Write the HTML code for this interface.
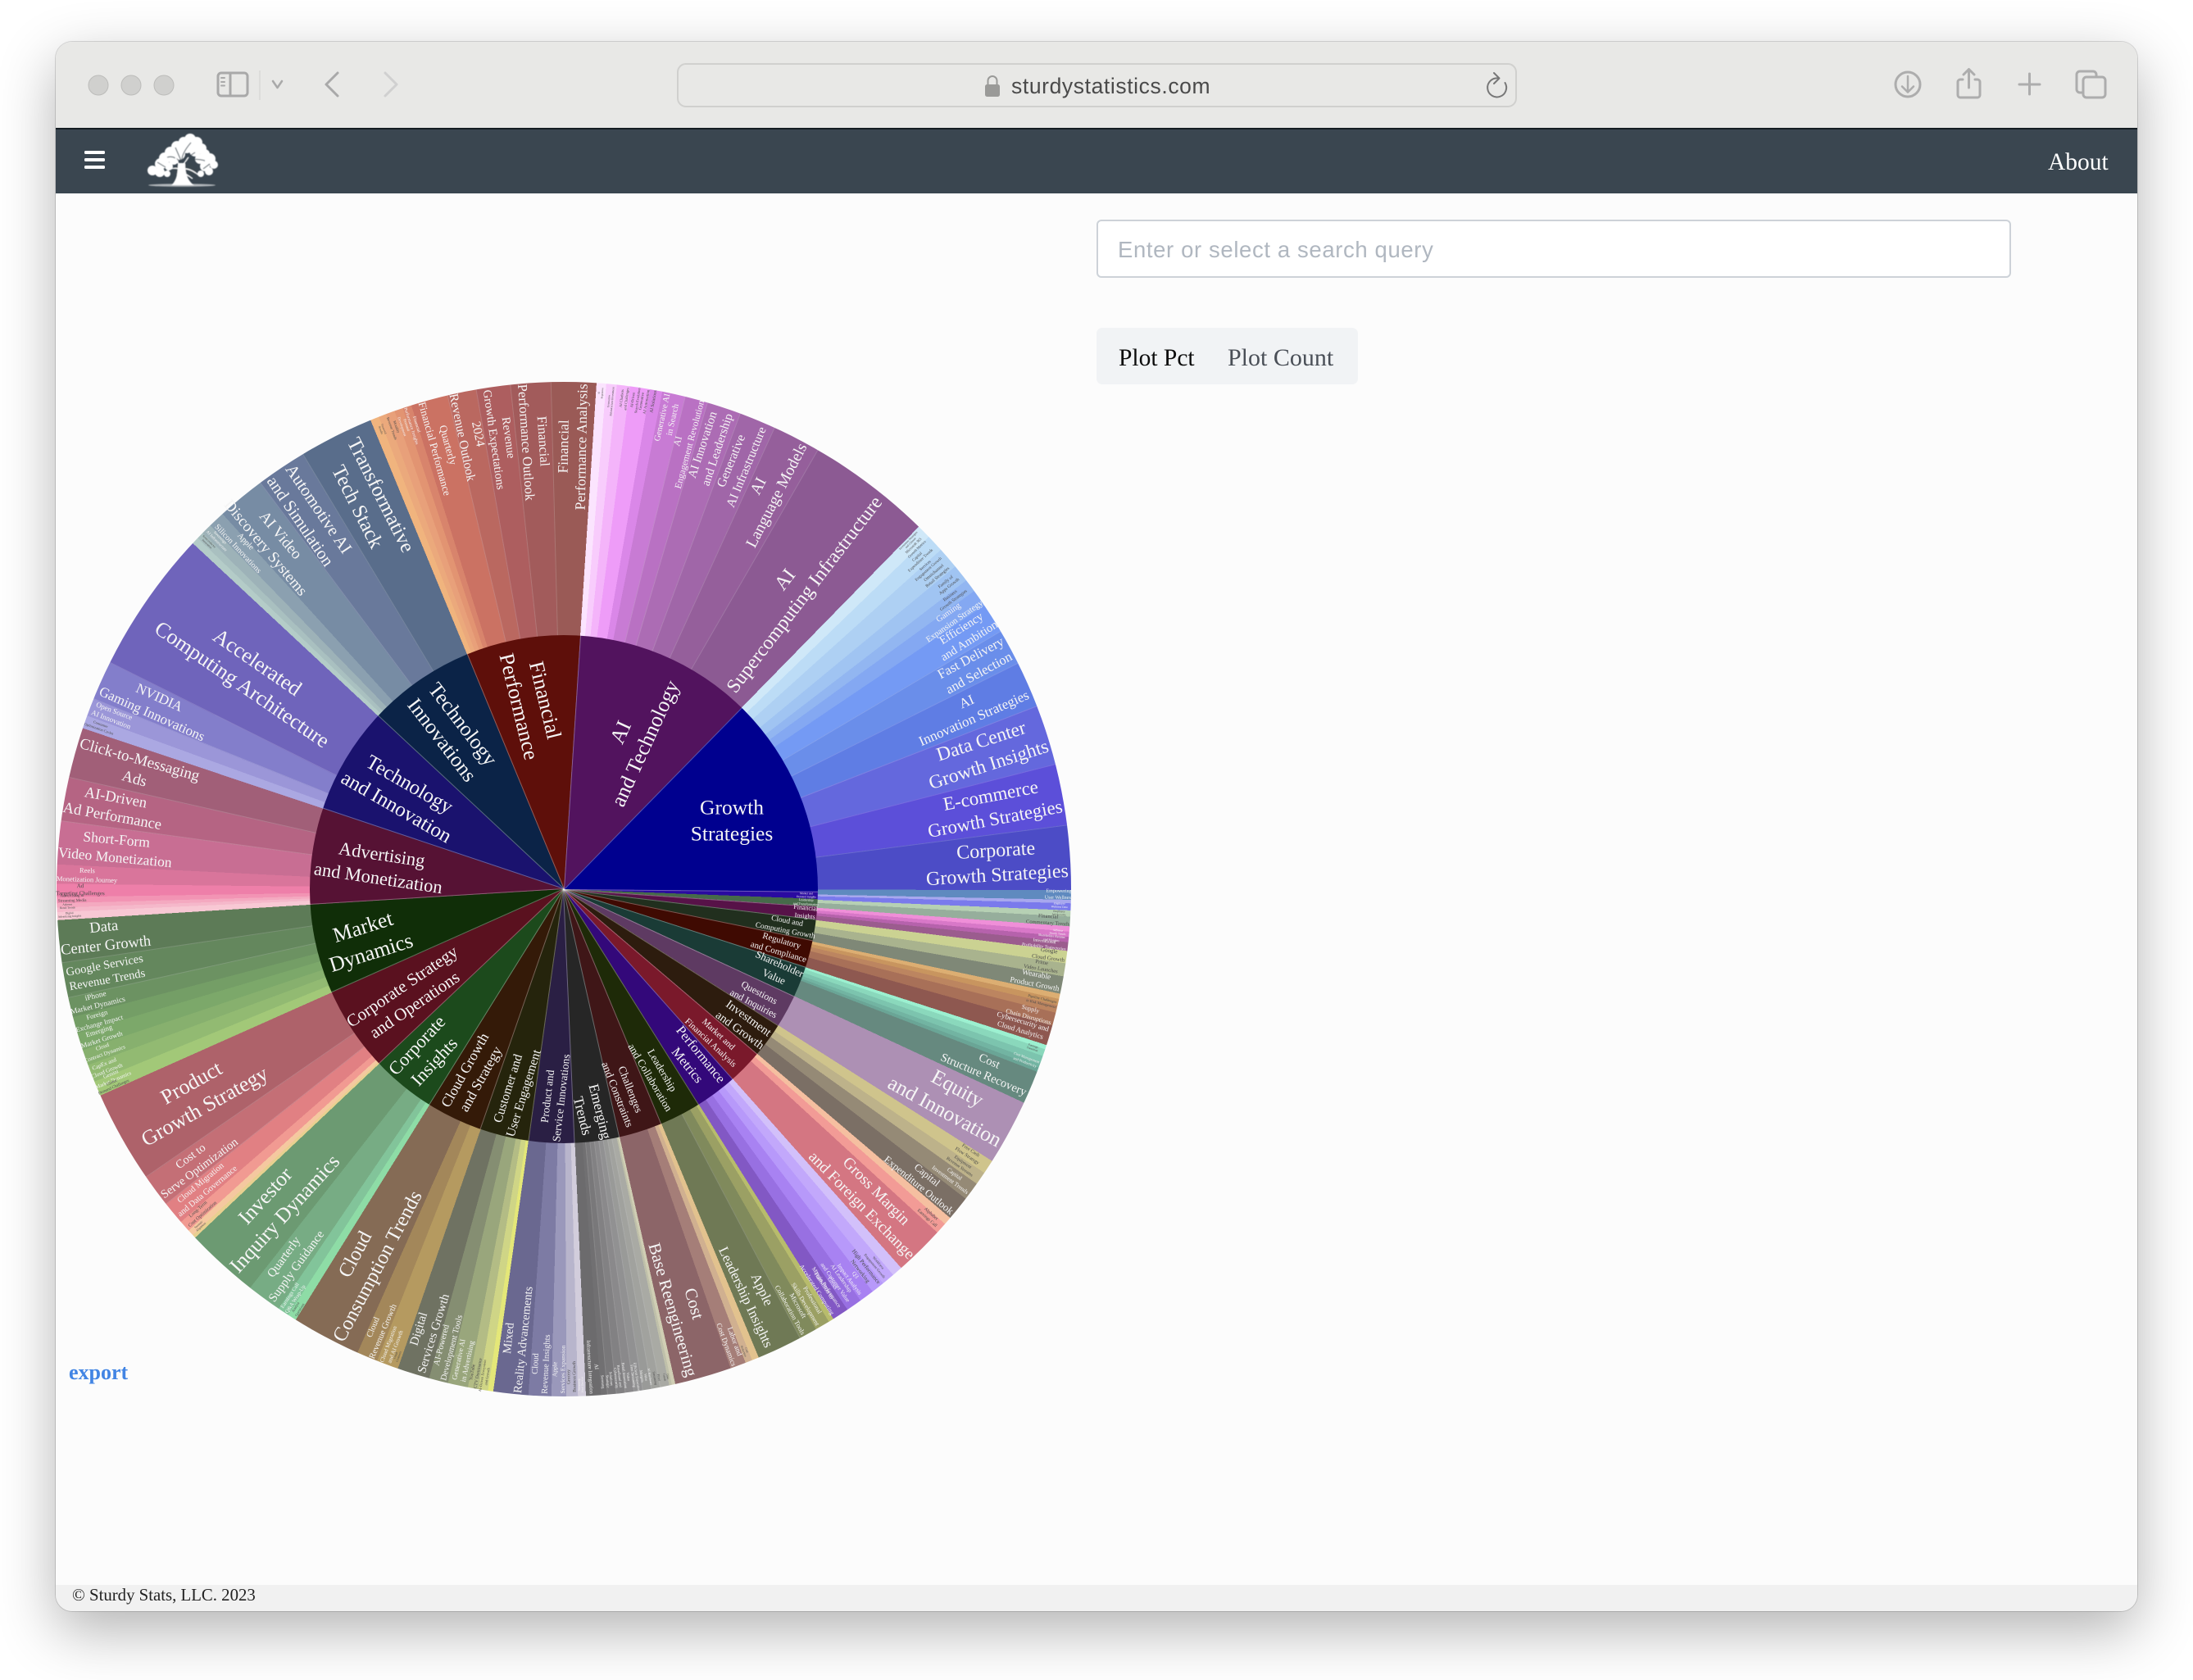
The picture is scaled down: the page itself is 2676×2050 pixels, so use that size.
<!DOCTYPE html>
<html lang="en"><head><meta charset="utf-8"><title>Sturdy Stats</title>
<style>
html,body{margin:0;padding:0;background:#fff;width:2676px;height:2050px;overflow:hidden}
*{box-sizing:border-box}
body{position:relative;font-family:"Liberation Serif",serif}
#win{position:absolute;left:68px;top:51px;width:2540px;height:1915px;border-radius:20px;background:#fcfcfc;box-shadow:0 24px 70px rgba(0,0,0,.3),0 0 0 1px rgba(0,0,0,.14)}
#bar{position:absolute;left:68px;top:51px;width:2540px;height:105px;background:#e8e8e6;border-radius:20px 20px 0 0}
#nav{position:absolute;left:68px;top:156px;width:2540px;height:80px;background:#3a4650;border-top:2px solid #141c22}
#foot{position:absolute;left:68px;top:1934px;width:2540px;height:32px;background:#f1f1f1;border-radius:0 0 20px 20px}
#url{position:absolute;left:826px;top:77px;width:1025px;height:54px;border:2px solid #d0d0ce;border-radius:11px}
.t{position:absolute;white-space:nowrap}
#ic{position:absolute;left:0;top:0}
#outer,#inner{position:absolute;border-radius:50%}
#outer{left:69px;top:466px;width:1238px;height:1238px;background:conic-gradient(
#9a5a56 0deg 3.7deg,#fbe4fe 3.7deg 4.8deg,#f8ccfc 4.8deg 6deg,#f4b4fa 6deg 7.5deg,#ee9cf8 7.5deg 9.8deg,#da87e8 9.8deg 11.2deg,#c87bd4 11.2deg 13.8deg,#b971c3 13.8deg 16.4deg,#ac6cb4 16.4deg 20.3deg,#a066a8 20.3deg 24.5deg,#955f9b 24.5deg 30deg,#8c5a93 30deg 44.4deg,
#cfe8f8 44.4deg 46deg,#bcdcf6 46deg 48deg,#aed0f3 48deg 50.5deg,#a0c4f2 50.5deg 52.5deg,#92b6f1 52.5deg 54deg,#84a8f2 54deg 56deg,#749af4 56deg 59.4deg,#6a8eea 59.4deg 63.5deg,#5f7de4 63.5deg 68.8deg,#6468dd 68.8deg 75.7deg,#5c4fd9 75.7deg 82.7deg,#4c4cc6 82.7deg 90.1deg,
#5f8abf 90.1deg 91.2deg,#a8a8ee 91.2deg 91.6deg,#7a7aec 91.6deg 92.4deg,#b6d0b4 92.4deg 93.1deg,#96ae9c 93.1deg 94.2deg,#ef8fd8 94.2deg 94.8deg,#d878c8 94.8deg 95.4deg,#b662ac 95.4deg 96deg,#9b5c8e 96deg 97deg,#cbd292 97deg 98.4deg,#a9b38e 98.4deg 99.9deg,#7f8877 99.9deg 101.9deg,#dcae72 101.9deg 102.5deg,#c8955f 102.5deg 103.2deg,#bc8560 103.2deg 104.1deg,#a87058 104.1deg 105.6deg,#8e5850 105.6deg 107.9deg,
#9cf0d0 107.9deg 108.4deg,#8ad8bc 108.4deg 109.2deg,#7cc4ae 109.2deg 110deg,#72b4a2 110deg 110.6deg,#6aa596 110.6deg 111.1deg,#66897f 111.1deg 114.9deg,#ad90b4 114.9deg 122.4deg,
#cfc48c 122.4deg 124deg,#bdb28a 124deg 125.5deg,#958a76 125.5deg 127.6deg,#7b6f65 127.6deg 130.4deg,#f5bfa0 130.4deg 131.3deg,#f29b96 131.3deg 132.6deg,#d47682 132.6deg 138.3deg,
#d2c0fa 138.3deg 139.5deg,#c2a8fb 139.5deg 141deg,#b799fa 141deg 142.5deg,#a882f2 142.5deg 144.2deg,#9870e2 144.2deg 146deg,#8258c4 146deg 147.9deg,
#b8bc6c 147.9deg 148.5deg,#9ba064 148.5deg 150.2deg,#808a5c 150.2deg 152.2deg,#6f7955 152.2deg 157.4deg,
#e2c28e 157.4deg 158.2deg,#d0b090 158.2deg 159deg,#a57e78 159deg 160.8deg,#8c6568 160.8deg 167.3deg,
#d0ceb4 167.3deg 167.7deg,#bfc0aa 167.7deg 168deg,#a9aaa4 168deg 169deg,#a1a29e 169deg 170deg,#999a98 170deg 171deg,#919192 171deg 172deg,#8a898b 172deg 173deg,#828183 173deg 174deg,#79787a 174deg 175deg,#717072 175deg 175.8deg,#6c6b6d 175.8deg 177.5deg,
#d2cddc 177.5deg 178.4deg,#b8b5cc 178.4deg 179.7deg,#9a98bb 179.7deg 181.4deg,#7d7ba4 181.4deg 184deg,#6a6890 184deg 188deg,
#e4e778 188deg 188.6deg,#cfd586 188.6deg 189.7deg,#b3bc85 189.7deg 190.9deg,#99a67c 190.9deg 193.2deg,#858e72 193.2deg 195.4deg,#6f7262 195.4deg 199.1deg,
#b59a60 199.1deg 201.6deg,#a3875a 201.6deg 204deg,#856b55 204deg 211.9deg,
#8edca6 211.9deg 212.9deg,#82c49a 212.9deg 214.2deg,#77ac84 214.2deg 218.2deg,#6c9a72 218.2deg 226.6deg,
#e8d090 226.6deg 227deg,#f5c8a0 227deg 227.7deg,#f19a92 227.7deg 229deg,#e18083 229deg 231.6deg,#c46f76 231.6deg 235.4deg,#ae626a 235.4deg 246deg,
#a2c878 246deg 247.7deg,#92ba72 247.7deg 249.7deg,#87b06e 249.7deg 251.5deg,#7ca86a 251.5deg 253.5deg,#749e66 253.5deg 255.4deg,#6c9262 255.4deg 257.6deg,#64875d 257.6deg 261.6deg,#5d7b57 261.6deg 266.5deg,
#f8c8d4 266.5deg 267.4deg,#f5b8ca 267.4deg 267.9deg,#f4a9c0 267.9deg 268.4deg,#f294b4 268.4deg 269.1deg,#ee7fa9 269.1deg 270.6deg,#d9759b 270.6deg 272.8deg,#c86e93 272.8deg 277.7deg,#b56483 277.7deg 282.7deg,#a15f78 282.7deg 288.5deg,
#aba8e2 288.5deg 290deg,#9b96d8 290deg 292deg,#837ecb 292deg 296.5deg,#6f64bb 296.5deg 313deg,
#b4ccc8 313deg 313.8deg,#a9c0c0 313.8deg 314.6deg,#9db2b8 314.6deg 315.8deg,#8ba0b0 315.8deg 317.7deg,#778ca4 317.7deg 323.2deg,#69799b 323.2deg 329deg,#596d8b 329deg 337.6deg,
#f0b47e 337.6deg 338.6deg,#eba97c 338.6deg 339.5deg,#e8a07a 339.5deg 340.5deg,#e29472 340.5deg 341.5deg,#d8846c 341.5deg 342.5deg,#cb7263 342.5deg 346.7deg,#ba6860 346.7deg 350deg,#ad5e5f 350deg 353.9deg,#a25b5b 353.9deg 358.5deg,#9a5a56 358.5deg 360deg)}
#inner{left:378px;top:775px;width:620px;height:620px;background:conic-gradient(
#5e0f0a 0deg 3.7deg,#52135e 3.7deg 44.4deg,#00008f 44.4deg 90.5deg,#2a0aa0 90.5deg 92.2deg,#466a4a 92.2deg 93.9deg,#571248 93.9deg 96.8deg,#212f1e 96.8deg 101.6deg,#3f0a02 101.6deg 107.8deg,#1a3b36 107.8deg 114.9deg,#5e3a62 114.9deg 122.4deg,#2d1c0e 122.4deg 130.4deg,#7a192b 130.4deg 138.3deg,#33087a 138.3deg 147.9deg,#1e2a08 147.9deg 157.4deg,#3f1617 157.4deg 167.3deg,#262626 167.3deg 177.5deg,#2a1f44 177.5deg 187.9deg,#25240c 187.9deg 199.1deg,#341a08 199.1deg 211.9deg,#1c4a1c 211.9deg 226.6deg,#5a111f 226.6deg 246deg,#102e08 246deg 266.5deg,#561234 266.5deg 288.5deg,#1a126e 288.5deg 313deg,#0b2347 313deg 337.6deg,#5e0f0a 337.6deg 360deg)}
.n,.o{position:absolute;left:688px;top:1085px;height:1px;transform-origin:0 0}
.n{width:310px;background:rgba(255,255,255,.32);transform:rotate(calc((var(--a) - 90)*1deg))}
.o{width:309px;background:rgba(255,255,255,.17);transform:rotate(calc((var(--a) - 90)*1deg)) translateX(310px)}
.R,.L,.h{position:absolute;left:688px;top:1085px;color:#f5f5f5;white-space:nowrap;text-align:center;line-height:1.27;transform-origin:0 0}
.R{transform:rotate(calc((var(--a) - 90)*1deg)) translateX(calc(var(--r)*1px)) rotate(calc(var(--d,0)*1deg)) translate(-50%,-50%)}
.L{transform:rotate(calc((var(--a) - 90)*1deg)) translateX(calc(var(--r)*1px)) rotate(calc((var(--d,0) + 180)*1deg)) translate(-50%,-50%)}
.k{color:#4a4a4a}
</style></head><body>
<div id="win"></div>
<div id="bar"></div>
<div id="nav"></div>
<div id="foot"></div>
<div id="url"></div>
<div class="t" style="left:1234px;top:90px;font:26.5px/31px 'Liberation Sans',sans-serif;color:#4a4a4a;letter-spacing:.6px">sturdystatistics.com</div>
<div class="t" style="left:2499px;top:180px;font-size:29.5px;line-height:36px;color:#fff">About</div>
<div style="position:absolute;left:1338px;top:268px;width:1116px;height:71px;background:#fff;border:2px solid #cdd2d8;border-radius:6px"></div>
<div class="t" style="left:1364px;top:288px;font:27.5px/34px 'Liberation Sans',sans-serif;color:#b0b7c0;letter-spacing:.62px">Enter or select a search query</div>
<div style="position:absolute;left:1338px;top:400px;width:319px;height:69px;background:#f1f3f5;border-radius:7px"></div>
<div class="t" style="left:1365px;top:419px;font-size:29.5px;line-height:36px;color:#0c0c0c">Plot Pct</div>
<div class="t" style="left:1498px;top:419px;font-size:30px;line-height:36px;color:#4a4f57">Plot Count</div>
<div class="t" style="left:84px;top:1658px;font-size:26px;line-height:34px;font-weight:bold;color:#4285e4">export</div>
<div class="t" style="left:88px;top:1934px;font-size:20.8px;line-height:26px;color:#222">© Sturdy Stats, LLC. 2023</div>

<svg id="ic" width="2676" height="2050" viewBox="0 0 2676 2050" fill="none">
<defs><filter id="sf" x="-5%" y="-5%" width="110%" height="110%"><feGaussianBlur stdDeviation=".55"/></filter></defs>
<g fill="#d0d0ce" stroke="#bcbcba" stroke-width="1"><circle cx="120" cy="104" r="12"/><circle cx="160" cy="104" r="12"/><circle cx="200" cy="104" r="12"/></g>
<g stroke="#a9a9a9" stroke-width="3" stroke-linecap="round" stroke-linejoin="round">
<rect x="266" y="89" width="36" height="28" rx="4"/><path d="M281 89V117"/>
<path d="M270 95h4M270 100h4M270 104.500h4" stroke-width="2"/>
<path d="M333 99L338.500 107L344 99" stroke-width="2.500"/>
<path d="M412 89L398 103L412 117"/></g>
<path d="M317 86V122" stroke="#d8d8d6" stroke-width="1.500"/>
<path d="M470 89L484 103L470 117" stroke="#d0d0d0" stroke-width="3" stroke-linecap="round" stroke-linejoin="round"/>
<rect x="1202" y="103" width="18" height="15" rx="2.500" fill="#9a9a98"/>
<path d="M1205.500 103V98.500a5.500 5.500 0 0 1 11 0V103" stroke="#9a9a98" stroke-width="2"/>
<path d="M1836.500 101A11.500 11.500 0 1 1 1828 95.500M1823 89L1829.500 95.500L1823 102" stroke="#777" stroke-width="2" stroke-linecap="round" stroke-linejoin="round"/>
<g stroke="#adadad" stroke-width="3" stroke-linecap="round" stroke-linejoin="round">
<circle cx="2328" cy="103" r="15"/><path d="M2328 93V112M2321 105.500L2328 112.500L2335 105.500" stroke-width="2.500"/>
<path d="M2395 97H2392a3 3 0 0 0-3 3V116a3 3 0 0 0 3 3H2413a3 3 0 0 0 3-3V100a3 3 0 0 0-3-3H2410"/>
<path d="M2402.500 85V107M2396 91L2402.500 84.500L2409 91"/>
<path d="M2476.500 90V115M2464 103H2489"/>
<path d="M2541 113H2538a4 4 0 0 1-4-4V91a4 4 0 0 1 4-4H2554a4 4 0 0 1 4 4V94"/>
<rect x="2542" y="94" width="27" height="25" rx="4"/></g>
<rect x="103" y="184" width="25" height="4" rx="1.500" fill="#fff"/><rect x="103" y="193" width="25" height="4" rx="1.500" fill="#fff"/><rect x="103" y="202" width="25" height="4" rx="1.500" fill="#fff"/>
<g filter="url(#sf)">
<g fill="#fff"><circle cx="232" cy="170" r="7"/><circle cx="224" cy="173" r="6"/><circle cx="240" cy="174" r="7"/><circle cx="216" cy="179" r="7"/><circle cx="246" cy="181" r="6"/><circle cx="228" cy="180" r="7"/><circle cx="238" cy="184" r="7"/><circle cx="208" cy="186" r="7"/><circle cx="219" cy="188" r="7"/><circle cx="250" cy="188" r="6"/><circle cx="201" cy="193" r="7"/><circle cx="212" cy="195" r="6"/><circle cx="256" cy="194" r="7"/><circle cx="244" cy="194" r="6"/><circle cx="196" cy="200" r="7"/><circle cx="261" cy="201" r="5"/><circle cx="250" cy="203" r="6"/><circle cx="206" cy="203" r="5"/><circle cx="186" cy="208" r="6"/><circle cx="195" cy="210" r="6"/><circle cx="204" cy="212" r="4"/><circle cx="255" cy="209" r="5"/><circle cx="245" cy="212" r="4"/></g>
<ellipse cx="226" cy="208" rx="14" ry="8" fill="#3a4650"/>
<g stroke="#3a4650" stroke-width="1.300" opacity=".75"><path d="M222 198C221 190 226 182 233 174M220 198C215 192 210 190 204 192M224 199C230 194 238 193 250 196M221 196L214 180M226 194L238 186M202 204L192 198M248 206L256 200"/></g>
<g fill="#fff"><ellipse cx="222" cy="226" rx="41" ry="1.800" opacity=".6"/>
<path d="M209 226C216 220 217 210 217 199L226 199C226 210 228 220 237 226Z"/></g>
<g stroke="#fff" stroke-width="1.400"><path d="M218 206C212 204 206 206 201 212M225 206C232 206 238 210 244 215M218 200L214 192M224 200L230 192M226 212L235 218"/></g>
</g>
</svg>

<div id="outer"></div>
<div id="inner"></div>

<!-- inner ring separators -->
<i class="n" style="--a:3.7"></i><i class="n" style="--a:44.4"></i><i class="n" style="--a:90.5"></i><i class="n" style="--a:93.9"></i><i class="n" style="--a:96.8"></i><i class="n" style="--a:101.6"></i><i class="n" style="--a:107.8"></i><i class="n" style="--a:114.9"></i><i class="n" style="--a:122.4"></i><i class="n" style="--a:130.4"></i><i class="n" style="--a:138.3"></i><i class="n" style="--a:147.9"></i><i class="n" style="--a:157.4"></i><i class="n" style="--a:167.3"></i><i class="n" style="--a:177.5"></i><i class="n" style="--a:187.9"></i><i class="n" style="--a:199.1"></i><i class="n" style="--a:211.9"></i><i class="n" style="--a:226.6"></i><i class="n" style="--a:246"></i><i class="n" style="--a:266.5"></i><i class="n" style="--a:288.5"></i><i class="n" style="--a:313"></i><i class="n" style="--a:337.6"></i>
<!-- outer ring separators -->
<i class="o" style="--a:13.8"></i><i class="o" style="--a:16.4"></i><i class="o" style="--a:20.3"></i><i class="o" style="--a:24.5"></i><i class="o" style="--a:30"></i><i class="o" style="--a:59.4"></i><i class="o" style="--a:63.5"></i><i class="o" style="--a:68.8"></i><i class="o" style="--a:75.7"></i><i class="o" style="--a:82.7"></i><i class="o" style="--a:152.2"></i><i class="o" style="--a:235.4"></i><i class="o" style="--a:231.6"></i><i class="o" style="--a:257.6"></i><i class="o" style="--a:261.6"></i><i class="o" style="--a:277.7"></i><i class="o" style="--a:282.7"></i><i class="o" style="--a:292"></i><i class="o" style="--a:296.5"></i><i class="o" style="--a:323.2"></i><i class="o" style="--a:329"></i><i class="o" style="--a:346.7"></i><i class="o" style="--a:350"></i><i class="o" style="--a:353.9"></i><i class="o" style="--a:358.5"></i>
<i class="o" style="--a:169"></i><i class="o" style="--a:170"></i><i class="o" style="--a:171"></i><i class="o" style="--a:172"></i><i class="o" style="--a:173"></i><i class="o" style="--a:174"></i><i class="o" style="--a:175"></i>

<!-- inner labels -->
<span class="h" style="left:893px;top:1002px;font-size:25.5px;transform:translate(-50%,-50%)">Growth<br>Strategies</span>
<span class="R" style="--a:24.5;--r:203;font-size:26px">AI<br>and Technology</span>
<span class="L" style="--a:350.3;--r:230;--d:-4;font-size:26px">Financial<br>Performance</span>
<span class="L" style="--a:324.5;--r:235;--d:-2;font-size:25.5px">Technology<br>Innovations</span>
<span class="L" style="--a:300;--r:227;font-size:25px">Technology<br>and Innovation</span>
<span class="L" style="--a:277;--r:226;--d:1.500;font-size:22.5px">Advertising<br>and Monetization</span>
<span class="L" style="--a:255.6;--r:248;--d:-3;font-size:26px">Market<br>Dynamics</span>
<span class="L" style="--a:235.6;--r:230;font-size:21px">Corporate Strategy<br>and Operations</span>
<span class="L" style="--a:220;--r:262;--d:3;font-size:22.5px">Corporate<br>Insights</span>
<span class="L" style="--a:206.2;--r:252;--d:3;font-size:17.5px">Cloud Growth<br>and Strategy</span>
<span class="L" style="--a:193.3;--r:253;--d:4;font-size:15.5px">Customer and<br>User Engagement</span>
<span class="L" style="--a:182.6;--r:254;--d:4;font-size:13.5px">Product and<br>Service Innovations</span>
<span class="R" style="--a:173;--r:276;--d:-7;font-size:17.5px">Emerging<br>Trends</span>
<span class="R" style="--a:163.5;--r:258;--d:-5;font-size:13.5px">Challenges<br>and Constraints</span>
<span class="R" style="--a:153.5;--r:252;--d:-4;font-size:13px">Leadership<br>and Collaboration</span>
<span class="R" style="--a:142.8;--r:262;--d:-2;font-size:16.5px">Performance<br>Metrics</span>
<span class="R" style="--a:135;--r:259;--d:-2;font-size:11px">Market and<br>Financial Analysis</span>
<span class="R" style="--a:127;--r:275;--d:-1;font-size:14.5px">Investment<br>and Growth</span>
<span class="R" style="--a:119.6;--r:270;--d:-2;font-size:12px">Questions<br>and Inquiries</span>
<span class="R" style="--a:110.9;--r:278;--d:3;font-size:13px">Shareholder<br>Value</span>
<span class="R" style="--a:105;--r:273;--d:1;font-size:10.8px">Regulatory<br>and Compliance</span>
<span class="R" style="--a:99.5;--r:275;--d:1.500;font-size:9.5px">Cloud and<br>Computing Growth</span>
<span class="R" style="--a:95.5;--r:296;font-size:8px">Financial<br>Insights</span>
<span class="R" style="--a:93;--r:296;font-size:4px">Leadership<br>and Transformation</span>
<span class="R" style="--a:91.5;--r:296;font-size:3.500px">Market and<br>Demand Insights</span>

<!-- AI and Technology -->
<span class="R" style="--a:37.5;--r:464;font-size:24px">AI<br>Supercomputing Infrastructure</span>
<span class="R" style="--a:27.2;--r:546;font-size:19.5px">AI<br>Language Models</span>
<span class="R" style="--a:22.4;--r:561;font-size:15.500px">Generative<br>AI Infrastructure</span>
<span class="R" style="--a:18.4;--r:568;font-size:15px">AI Innovation<br>and Leadership</span>
<span class="R" style="--a:15.100;--r:564;font-size:11.500px">AI<br>Engagement Revolution</span>
<span class="R" style="--a:12.500;--r:588;font-size:10.500px">Generative AI<br>in Search</span>
<span class="R k" style="--a:10.500;--r:605;font-size:5.500px">AI Solutions</span>
<span class="R k" style="--a:9.500;--r:603;font-size:5px">Generative<br>AI Automation</span>
<span class="R k" style="--a:8.300;--r:603;font-size:4.500px">AI-Driven<br>Search Evolution</span>
<span class="R k" style="--a:7;--r:603;font-size:4.500px">AI Chatbots<br>and Challenges</span>
<span class="R k" style="--a:5.500;--r:598;font-size:3.500px">Generative<br>Infrastructure Investment</span>
<span class="R k" style="--a:4.300;--r:607;font-size:3px">AI<br>Regulation</span>

<!-- Growth Strategies -->
<span class="R" style="--a:86.6;--r:529;font-size:24px">Corporate<br>Growth Strategies</span>
<span class="R" style="--a:79.2;--r:533;font-size:23px">E-commerce<br>Growth Strategies</span>
<span class="R" style="--a:72.2;--r:540;font-size:23.500px">Data Center<br>Growth Insights</span>
<span class="R" style="--a:66.2;--r:542;font-size:17px">AI<br>Innovation Strategies</span>
<span class="R" style="--a:61.500;--r:571;font-size:16.500px">Fast Delivery<br>and Selection</span>
<span class="R" style="--a:57.7;--r:580;font-size:14.500px">Efficiency<br>and Ambition</span>
<span class="R" style="--a:55;--r:578;font-size:10.500px">Gaming<br>Expansion Strategy</span>
<span class="R k" style="--a:53.2;--r:592;font-size:5.500px">Business<br>Growth Strategies</span>
<span class="R k" style="--a:51.6;--r:598;font-size:5.500px">Family of<br>Apps Growth</span>
<span class="R k" style="--a:49.9;--r:594;font-size:5.500px">Omnichannel<br>Retail Strategies</span>
<span class="R k" style="--a:48.6;--r:592;font-size:5px">Services<br>Engagement Growth</span>
<span class="R k" style="--a:47.2;--r:592;font-size:5px">Capital<br>Expenditure Trends</span>
<span class="R k" style="--a:45.8;--r:598;font-size:4.500px">Microsoft 365<br>Growth Metrics</span>
<span class="R k" style="--a:44.9;--r:598;font-size:3.500px">Investment Strategies<br>and Climate</span>

<!-- right narrow -->
<span class="R" style="--a:90.7;--r:604;font-size:6px">Empowering<br>User Wellness</span>
<span class="R" style="--a:91.9;--r:605;font-size:3.500px">Employee<br>Wellness Data</span>
<span class="R k" style="--a:92.8;--r:605;font-size:3.500px">Employee<br>Job Security</span>
<span class="R k" style="--a:93.7;--r:592;font-size:6.500px">Financial<br>Commentary Trends</span>
<span class="R" style="--a:95;--r:605;font-size:3.500px">AdSense<br>Search Trends</span>
<span class="R" style="--a:95.7;--r:598;font-size:4px">Shareholder Returns<br>and Margins</span>
<span class="R" style="--a:96.6;--r:590;font-size:5.500px">International<br>Profitability Trajectories</span>
<span class="R k" style="--a:97.7;--r:597;font-size:7px">Google<br>Cloud Growth</span>
<span class="R k" style="--a:99.2;--r:590;font-size:6.500px">Prime<br>Video Launches</span>
<span class="R" style="--a:100.9;--r:586;font-size:9.500px">Wearable<br>Product Growth</span>
<span class="R k" style="--a:103.2;--r:599;font-size:4.500px">Pipeline Challenges<br>in Risk Management</span>
<span class="R" style="--a:104.9;--r:588;font-size:7.800px">Supply<br>Chain Disruptions</span>
<span class="R" style="--a:106.7;--r:583;font-size:9px">Cybersecurity and<br>Cloud Analytics</span>
<span class="R k" style="--a:108.7;--r:604;font-size:3.500px">Earnings<br>Transition</span>
<span class="R" style="--a:110.3;--r:601;font-size:4.500px">Cost Management<br>and Productivity</span>
<span class="R" style="--a:113;--r:560;font-size:14.500px">Cost<br>Structure Recovery</span>
<span class="R" style="--a:118.6;--r:538;font-size:25.500px">Equity<br>and Innovation</span>
<span class="R k" style="--a:123.2;--r:590;font-size:6px">Free Cash<br>Flow Strategy</span>
<span class="R k" style="--a:124.8;--r:590;font-size:5.500px">Equipment<br>Revenue Streams</span>
<span class="R" style="--a:126.6;--r:590;font-size:7.200px">Capital<br>Investment Trends</span>
<span class="R" style="--a:129.1;--r:564;font-size:12.500px">Capital<br>Expenditure Outlook</span>
<span class="R" style="--a:135.500;--r:530;font-size:19.5px">Gross Margin<br>and Foreign Exchange</span>
<span class="R k" style="--a:131.9;--r:598;font-size:5.500px">Alphabet<br>Earnings Call</span>

<!-- purple / leadership -->
<span class="R k" style="--a:140.2;--r:596;font-size:4.500px">Workforce<br>Engagement Growth</span>
<span class="R k" style="--a:141.8;--r:590;font-size:7px">High Performance<br>Networking</span>
<span class="R" style="--a:143.4;--r:590;font-size:7px">Q3<br>Impact Analysis</span>
<span class="R" style="--a:145;--r:583;font-size:7px">AI Leadership<br>and Customer Value</span>
<span class="R" style="--a:146.2;--r:582;font-size:7px">Gross<br>Margin Performance</span>
<span class="R" style="--a:147.2;--r:578;font-size:7.500px">Transition to<br>Accelerated Computing</span>
<span class="R" style="--a:149.3;--r:586;font-size:7.500px">Professional<br>Skills Development</span>
<span class="R" style="--a:151.2;--r:583;font-size:8.500px">Microsoft<br>Collaboration Tools</span>
<span class="R" style="--a:154.8;--r:545;font-size:17px">Apple<br>Leadership Insights</span>
<span class="R" style="--a:159.9;--r:590;font-size:9px">Labor and<br>Cost Dynamics</span>
<span class="R k" style="--a:158.6;--r:605;font-size:3.500px">Cost<br>Reduction</span>
<span class="R" style="--a:164;--r:530;font-size:21px">Cost<br>Base Reengineering</span>

<!-- grays -->
<span class="R" style="--a:176.6;--r:584;font-size:6.500px">AI<br>Infrastructure Integration</span>
<span class="R" style="--a:175.2;--r:603;font-size:4.500px">Strategic<br>Samsung</span>
<span class="R" style="--a:174.2;--r:600;font-size:4.500px">Cybersecurity<br>Solutions</span>
<span class="R" style="--a:173.2;--r:598;font-size:4.500px">Retail Innovation<br>Broadband and</span>
<span class="R" style="--a:172.2;--r:600;font-size:4.500px">Free Streaming<br>Video</span>
<span class="R" style="--a:171.2;--r:602;font-size:4.500px">Mergers<br>Efficient Expansion</span>
<span class="R" style="--a:170.2;--r:604;font-size:4px">AI Hardware<br>Value</span>
<span class="R k" style="--a:169.2;--r:607;font-size:4px">Pixel<br>Streaming</span>
<span class="R k" style="--a:168.2;--r:608;font-size:3.500px">Data<br>Trends</span>

<!-- Product -->
<span class="L" style="--a:186;--r:552;font-size:14.500px">Mixed<br>Reality Advancements</span>
<span class="L" style="--a:182.7;--r:580;font-size:10.500px">Cloud<br>Revenue Insights</span>
<span class="L" style="--a:180.6;--r:586;font-size:7.500px">Apple<br>Services Expansion</span>
<span class="L k" style="--a:179;--r:595;font-size:5.500px">Grocery<br>Business Growth</span>
<span class="L" style="--a:178;--r:605;font-size:3.500px">Streaming<br>Pixel Devices</span>

<!-- Customer -->
<span class="L" style="--a:197.2;--r:565;font-size:15px">Digital<br>Services Growth</span>
<span class="L" style="--a:194.3;--r:576;font-size:10.500px">AI-Powered<br>Development Tools</span>
<span class="L" style="--a:192;--r:588;font-size:9px">Generative AI<br>in Advertising</span>
<span class="L k" style="--a:190.3;--r:600;font-size:5.500px">YouTube<br>CTV Dominance</span>
<span class="L k" style="--a:189.2;--r:602;font-size:4.500px">AI-Driven Ecosystem<br>and Growth</span>

<!-- Cloud -->
<span class="L" style="--a:208;--r:513;font-size:24.5px">Cloud<br>Consumption Trends</span>
<span class="L" style="--a:202.8;--r:583;font-size:10.500px">Cloud<br>Revenue Growth</span>
<span class="L" style="--a:200.6;--r:595;font-size:7px">Cloud Migration<br>and AI Growth</span>
<span class="L k" style="--a:199.6;--r:605;font-size:3.500px">Cloud<br>Contracts</span>

<!-- Insights -->
<span class="L" style="--a:222.4;--r:522;font-size:25.5px">Investor<br>Inquiry Dynamics</span>
<span class="L" style="--a:216.2;--r:564;font-size:15px">Quarterly<br>Supply Guidance</span>
<span class="L" style="--a:213.5;--r:598;font-size:6.500px">Earnings Call<br>Q&amp;A Wrap-Up</span>
<span class="L k" style="--a:212.4;--r:606;font-size:4.500px">Analyst<br>Questions</span>

<!-- Corporate strategy -->
<span class="L" style="--a:240.7;--r:512;font-size:26px">Product<br>Growth Strategy</span>
<span class="L" style="--a:233.4;--r:560;font-size:14.500px">Cost to<br>Serve Optimization</span>
<span class="L" style="--a:230.3;--r:570;font-size:10.500px">Cloud Migration<br>and Data Governance</span>
<span class="L k" style="--a:228.3;--r:593;font-size:6px">Long-Term<br>Cost Optimization</span>
<span class="L k" style="--a:227.2;--r:605;font-size:3.500px">Strategic<br>Alignment</span>

<!-- Market -->
<span class="L" style="--a:264;--r:563;font-size:18.500px">Data<br>Center Growth</span>
<span class="L" style="--a:259.6;--r:568;font-size:14.500px">Google Services<br>Revenue Trends</span>
<span class="L" style="--a:256.5;--r:586;font-size:9.500px">iPhone<br>Market Dynamics</span>
<span class="L" style="--a:254.4;--r:590;font-size:8.500px">Foreign<br>Exchange Impact</span>
<span class="L" style="--a:252.5;--r:593;font-size:8.500px">Emerging<br>Market Growth</span>
<span class="L" style="--a:250.6;--r:595;font-size:6.800px">Cloud<br>Contract Dynamics</span>
<span class="L" style="--a:248.7;--r:600;font-size:7px">CapEx and<br>Cloud Growth</span>
<span class="L" style="--a:247.3;--r:597;font-size:6.500px">Gemini<br>Market Dynamics</span>
<span class="L k" style="--a:246.4;--r:600;font-size:5px">Global<br>Demand Challenges</span>

<!-- Advertising -->
<span class="L" style="--a:285.6;--r:541;font-size:19px">Click-to-Messaging<br>Ads</span>
<span class="L" style="--a:280.2;--r:558;font-size:18.500px">AI-Driven<br>Ad Performance</span>
<span class="L" style="--a:275.2;--r:549;font-size:17.500px">Short-Form<br>Video Monetization</span>
<span class="L" style="--a:271.7;--r:582;font-size:8.500px">Reels<br>Monetization Journey</span>
<span class="L k" style="--a:269.9;--r:590;font-size:7px">Ad<br>Targeting Challenges</span>
<span class="L k" style="--a:268.8;--r:600;font-size:5px">Advertising in<br>Streaming Media</span>
<span class="L k" style="--a:268;--r:606;font-size:3.500px">Adsense<br>Retail Trends</span>
<span class="L k" style="--a:267;--r:604;font-size:3.500px">Digital<br>Advertising Insights</span>

<!-- Tech & Innov -->
<span class="L" style="--a:304.5;--r:465;font-size:26px">Accelerated<br>Computing Architecture</span>
<span class="L" style="--a:294.2;--r:546;font-size:17px">NVIDIA<br>Gaming Innovations</span>
<span class="L" style="--a:291;--r:590;font-size:9px">Open Source<br>AI Innovation</span>
<span class="L k" style="--a:289.3;--r:600;font-size:4.500px">Consumer<br>Optimization Cycles</span>

<!-- Tech Innovations -->
<span class="L" style="--a:333.3;--r:530;font-size:25px">Transformative<br>Tech Stack</span>
<span class="L" style="--a:325.8;--r:552;font-size:21px">Automotive AI<br>and Simulation</span>
<span class="L" style="--a:320;--r:553;font-size:19px">AI Video<br>Discovery Systems</span>
<span class="L" style="--a:316.8;--r:575;font-size:10px">Apple<br>Silicon Innovations</span>
<span class="L" style="--a:315.2;--r:600;font-size:5px">Sovereign<br>AI Infrastructure</span>
<span class="L k" style="--a:314.2;--r:606;font-size:3.500px">Semiconductor<br>Innovation</span>

<!-- Financial -->
<span class="R" style="--a:1.1;--r:540;font-size:17.500px">Financial<br>Performance Analysis</span>
<span class="L" style="--a:356.2;--r:547;font-size:16.500px">Financial<br>Performance Outlook</span>
<span class="L" style="--a:352;--r:555;font-size:14.500px">Revenue<br>Growth Expectations</span>
<span class="L" style="--a:348.3;--r:565;font-size:15.500px">2024<br>Revenue Outlook</span>
<span class="L" style="--a:344.5;--r:560;font-size:13px">Quarterly<br>Financial Performance</span>
<span class="L" style="--a:342;--r:595;font-size:5.500px">Financial<br>Performance Insights</span>
<span class="L" style="--a:341;--r:598;font-size:4.500px">Personal<br>Development</span>
<span class="L k" style="--a:339.8;--r:600;font-size:4.500px">Monthly<br>Revenue Trends</span>
<span class="L k" style="--a:338.4;--r:603;font-size:3.500px">Financial<br>Results</span>
</body></html>
